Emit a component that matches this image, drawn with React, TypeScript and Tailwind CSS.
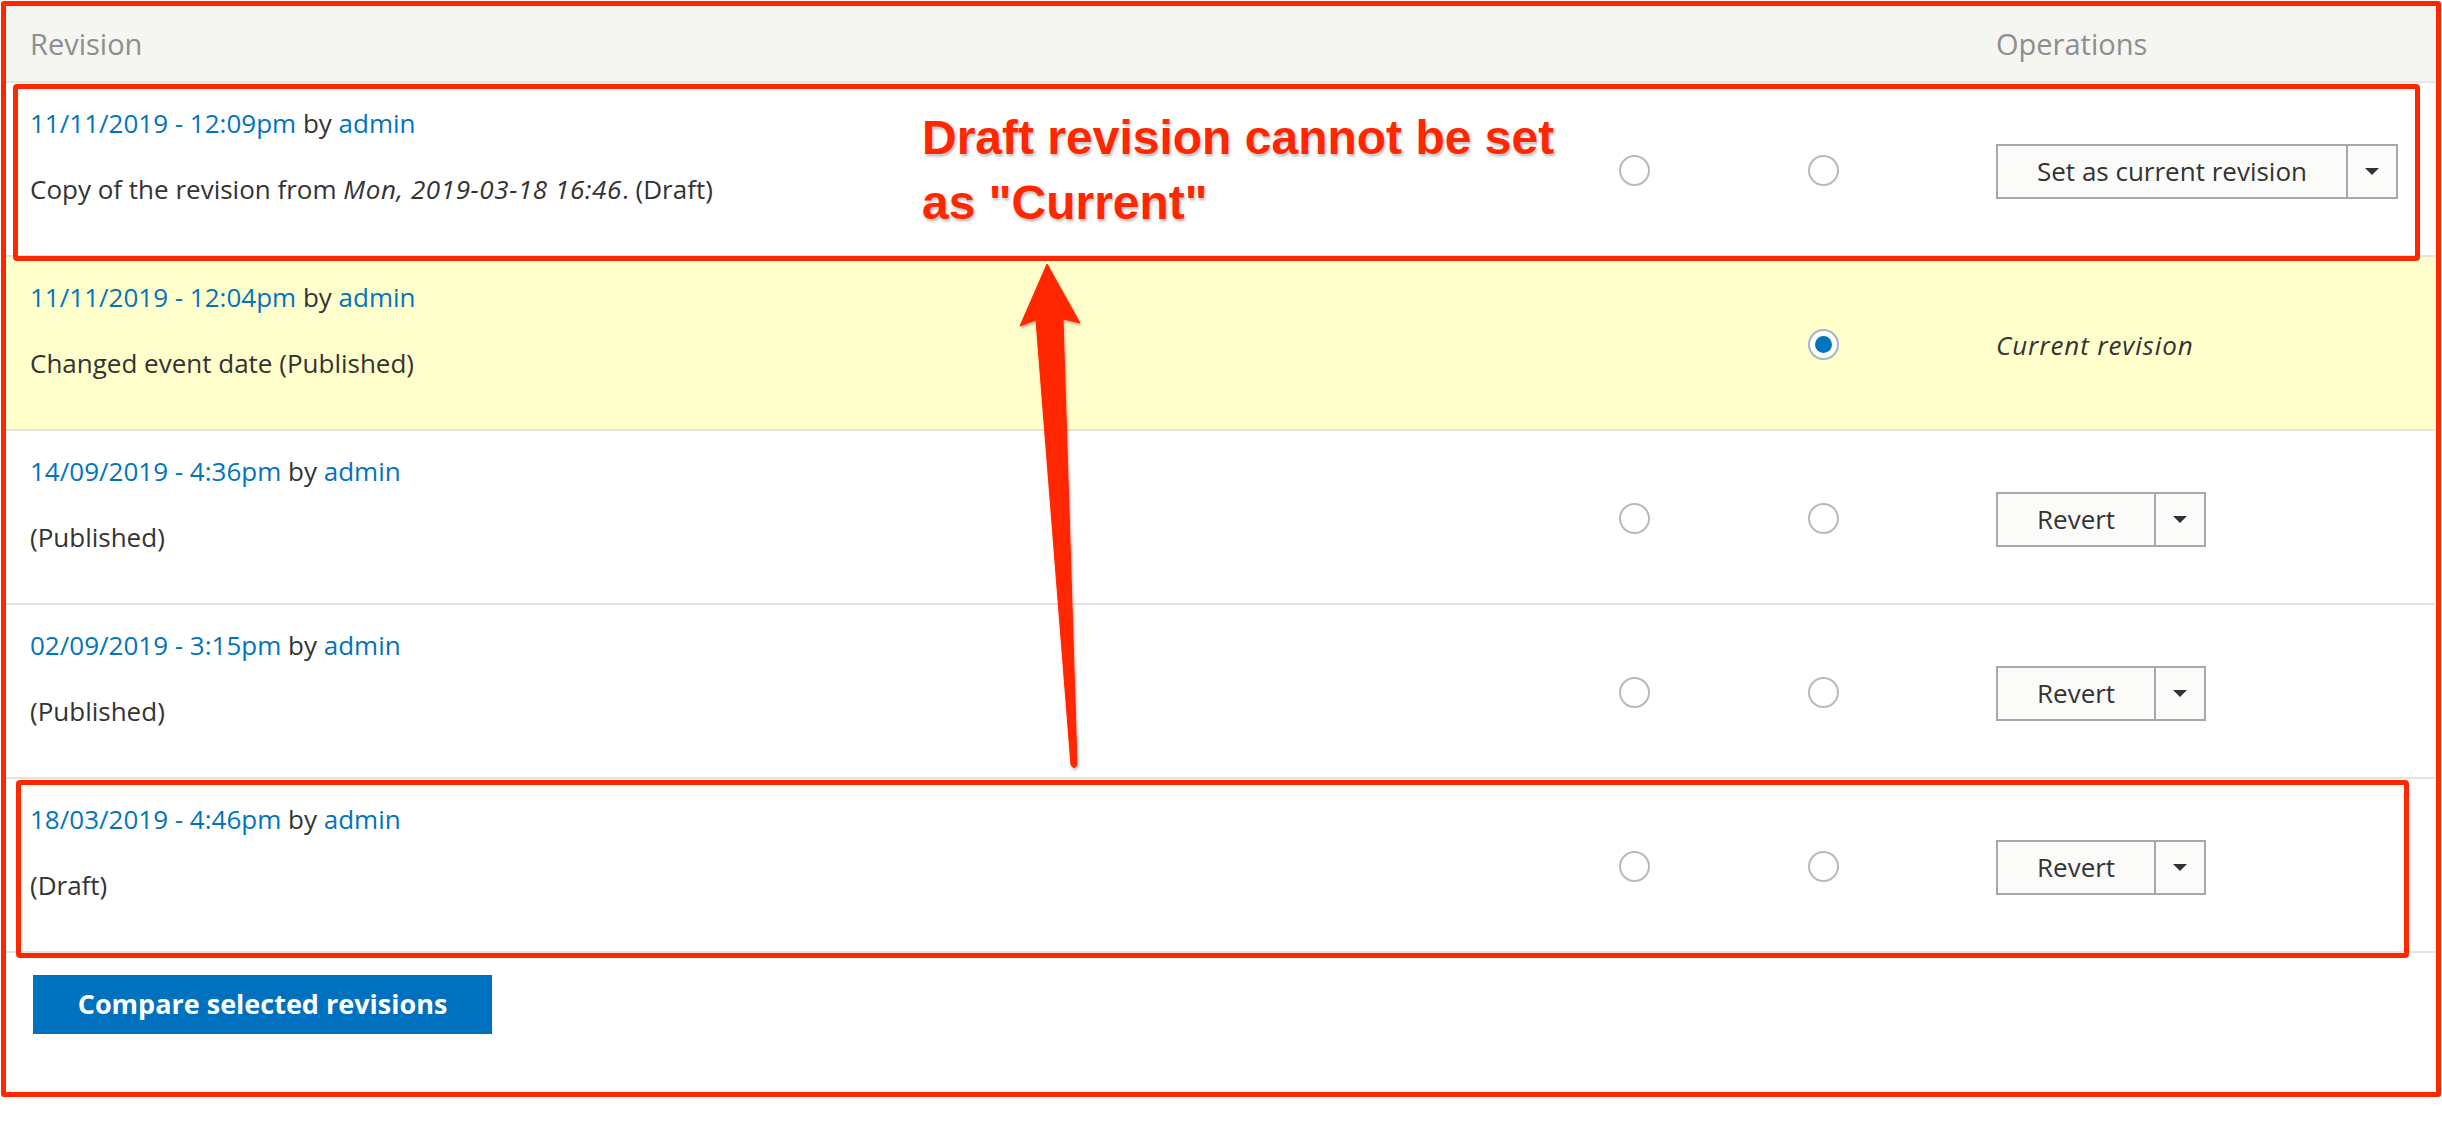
import React from "react";

type Revision = {
  date: string;
  note: React.ReactNode;
  current?: boolean;
  op?: string;
};

const revisions: Revision[] = [
  {
    date: "11/11/2019 - 12:09pm",
    note: (
      <>
        Copy of the revision from{" "}
        <em className="tracking-[0.6px]">Mon, 2019-03-18 16:46</em>. (Draft)
      </>
    ),
    op: "Set as current revision",
  },
  { date: "11/11/2019 - 12:04pm", note: "Changed event date (Published)", current: true },
  { date: "14/09/2019 - 4:36pm", note: "(Published)", op: "Revert" },
  { date: "02/09/2019 - 3:15pm", note: "(Published)", op: "Revert" },
  { date: "18/03/2019 - 4:46pm", note: "(Draft)", op: "Revert" },
];

const Radio = ({ checked }: { checked?: boolean }) =>
  checked ? (
    <span className="w-[31px] h-[31px] rounded-full border-2 border-[#a3b5c4] bg-white grid place-items-center">
      <span className="w-[17px] h-[17px] rounded-full bg-[#0074bd]" />
    </span>
  ) : (
    <span className="w-[31px] h-[31px] rounded-full border-2 border-[#b9b9b9] bg-white" />
  );

const SplitButton = ({ label }: { label: string }) => (
  <div className="flex h-[55px] border-2 border-[#a8a8a8] bg-[#fbfbf9]">
    <span className="px-[39px] flex items-center text-[26px] text-[#333]">{label}</span>
    <span className="w-[50px] border-l-2 border-[#a8a8a8] flex items-center justify-center">
      <span className="w-0 h-0 border-l-[7px] border-r-[7px] border-t-[7px] border-l-transparent border-r-transparent border-t-[#333]" />
    </span>
  </div>
);

const Row = ({ rev }: { rev: Revision }) => (
  <div
    className={`flex h-[174px] border-b-2 border-[#e4e4df] ${
      rev.current ? "bg-[#ffffcc]" : "bg-white"
    }`}
  >
    <div className="flex-1 pl-[24px] pt-[22px] flex flex-col gap-[30px] text-[26px] leading-[36px] text-[#333]">
      <div>
        <span className="text-[#0074bd]">{rev.date}</span> by{" "}
        <span className="text-[#0074bd]">admin</span>
      </div>
      <div>{rev.note}</div>
    </div>
    <div className="w-[189px] pt-[3px] flex items-center justify-center">
      {!rev.current && <Radio />}
    </div>
    <div className="w-[188px] pt-[3px] flex items-center justify-center">
      <Radio checked={rev.current} />
    </div>
    <div className="w-[518px] pl-[79px] pt-[5px] flex items-center">
      {rev.op ? (
        <SplitButton label={rev.op} />
      ) : (
        <em className="text-[26px] tracking-[0.9px] text-[#333]">Current revision</em>
      )}
    </div>
  </div>
);

const App = () => {
  return (
    <div className="relative w-[2442px] h-[1140px] bg-white overflow-hidden font-['Open_Sans',sans-serif]">
      {/* Table */}
      <div className="ml-[6px] mt-[6px] w-[2429px]">
        <div className="flex h-[77px] items-center bg-[#f5f5f2] border-b-2 border-[#e6e6e1] text-[29px] text-[#8e8e8e]">
          <span className="flex-1 pl-[24px]">Revision</span>
          <span className="w-[189px]" />
          <span className="w-[188px]" />
          <span className="w-[518px] pl-[79px]">Operations</span>
        </div>

        {revisions.map((rev, index) => (
          <Row key={index} rev={rev} />
        ))}

        <button className="ml-[27px] mt-[22px] w-[459px] h-[59px] bg-[#0071bf] text-white text-[27px] font-bold">
          Compare selected revisions
        </button>
      </div>

      {/* Annotations */}
      <div className="absolute left-[1px] top-[1px] w-[2440px] h-[1096px] border-[5px] border-[#ff2600] rounded-[3px]" />
      <div className="absolute left-[13px] top-[84px] w-[2407px] h-[177px] border-[5px] border-[#ff2600] rounded-[4px]" />
      <div className="absolute left-[16px] top-[780px] w-[2393px] h-[178px] border-[5px] border-[#ff2600] rounded-[4px]" />

      <div className="absolute left-[922px] top-[105px] text-[48px] leading-[65px] font-bold text-[#ff2600] font-['Liberation_Sans',Arial,sans-serif] [text-shadow:0_0_3px_#fff,1px_2px_3px_rgba(0,0,0,0.35)]">
        <div>Draft revision cannot be set</div>
        <div>as "Current"</div>
      </div>

      <svg className="absolute left-0 top-0 pointer-events-none" width="2442" height="1140">
        <defs>
          <filter id="sh" x="-20%" y="-5%" width="140%" height="110%">
            <feDropShadow dx="1" dy="2" stdDeviation="1.5" floodColor="#000" floodOpacity="0.3" />
          </filter>
        </defs>
        <polygon
          points="1047,264 1080,323 1063,319 1077,765 1074,768 1071,765 1036,320 1020,326"
          fill="#ff2600"
          stroke="#ff2600"
          strokeLinejoin="round"
          strokeWidth="1"
          filter="url(#sh)"
        />
      </svg>
    </div>
  );
};

export default App;
